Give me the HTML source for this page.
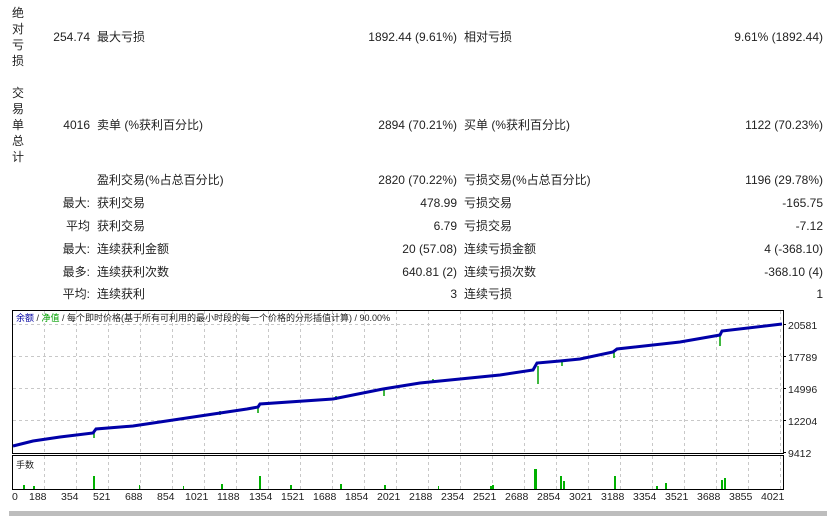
<!DOCTYPE html>
<html><head><meta charset="utf-8"><style>
body{margin:0;width:833px;height:516px;background:#fff;overflow:hidden;position:relative;font-family:"Liberation Sans","Noto Sans CJK SC",sans-serif;font-size:12px;color:#222}
.t{position:absolute;white-space:nowrap;line-height:14px}
.r{text-align:right}
.v{position:absolute;left:11px;width:14px;text-align:center;line-height:16px}
</style></head><body>
<div class="v" style="top:5px">绝<br>对<br>亏<br>损</div>
<div class="v" style="top:85px">交<br>易<br>单<br>总<br>计</div>

<div class="t r" style="right:743px;top:30px">254.74</div>
<div class="t" style="left:97px;top:30px">最大亏损</div>
<div class="t r" style="right:376px;top:30px">1892.44 (9.61%)</div>
<div class="t" style="left:464px;top:30px">相对亏损</div>
<div class="t r" style="right:10px;top:30px">9.61% (1892.44)</div>

<div class="t r" style="right:743px;top:118px">4016</div>
<div class="t" style="left:97px;top:118px">卖单 (%获利百分比)</div>
<div class="t r" style="right:376px;top:118px">2894 (70.21%)</div>
<div class="t" style="left:464px;top:118px">买单 (%获利百分比)</div>
<div class="t r" style="right:10px;top:118px">1122 (70.23%)</div>

<div class="t" style="left:97px;top:173px">盈利交易(%占总百分比)</div>
<div class="t r" style="right:376px;top:173px">2820 (70.22%)</div>
<div class="t" style="left:464px;top:173px">亏损交易(%占总百分比)</div>
<div class="t r" style="right:10px;top:173px">1196 (29.78%)</div>

<div class="t r" style="right:743px;top:196px">最大:</div>
<div class="t" style="left:97px;top:196px">获利交易</div>
<div class="t r" style="right:376px;top:196px">478.99</div>
<div class="t" style="left:464px;top:196px">亏损交易</div>
<div class="t r" style="right:10px;top:196px">-165.75</div>

<div class="t r" style="right:743px;top:219px">平均</div>
<div class="t" style="left:97px;top:219px">获利交易</div>
<div class="t r" style="right:376px;top:219px">6.79</div>
<div class="t" style="left:464px;top:219px">亏损交易</div>
<div class="t r" style="right:10px;top:219px">-7.12</div>

<div class="t r" style="right:743px;top:242px">最大:</div>
<div class="t" style="left:97px;top:242px">连续获利金额</div>
<div class="t r" style="right:376px;top:242px">20 (57.08)</div>
<div class="t" style="left:464px;top:242px">连续亏损金额</div>
<div class="t r" style="right:10px;top:242px">4 (-368.10)</div>

<div class="t r" style="right:743px;top:265px">最多:</div>
<div class="t" style="left:97px;top:265px">连续获利次数</div>
<div class="t r" style="right:376px;top:265px">640.81 (2)</div>
<div class="t" style="left:464px;top:265px">连续亏损次数</div>
<div class="t r" style="right:10px;top:265px">-368.10 (4)</div>

<div class="t r" style="right:743px;top:287px">平均:</div>
<div class="t" style="left:97px;top:287px">连续获利</div>
<div class="t r" style="right:376px;top:287px">3</div>
<div class="t" style="left:464px;top:287px">连续亏损</div>
<div class="t r" style="right:10px;top:287px">1</div>

<svg style="position:absolute;left:0;top:0" width="833" height="516">
<g stroke="#c8c8c8" stroke-dasharray="3,3" stroke-width="1">
<path d="M13 324.5H782M13 356.5H782M13 388.5H782M13 420.5H782"/>
<path d="M44.5 311V453M76.5 311V453M108.5 311V453M140.5 311V453M172.5 311V453M204.5 311V453M236.5 311V453M268.5 311V453M300.5 311V453M332.5 311V453M364.5 311V453M396.5 311V453M428.5 311V453M460.5 311V453M492.5 311V453M524.5 311V453M556.5 311V453M588.5 311V453M620.5 311V453M652.5 311V453M684.5 311V453M716.5 311V453M748.5 311V453M780.5 311V453"/>
<path d="M44.5 456V489M76.5 456V489M108.5 456V489M140.5 456V489M172.5 456V489M204.5 456V489M236.5 456V489M268.5 456V489M300.5 456V489M332.5 456V489M364.5 456V489M396.5 456V489M428.5 456V489M460.5 456V489M492.5 456V489M524.5 456V489M556.5 456V489M588.5 456V489M620.5 456V489M652.5 456V489M684.5 456V489M716.5 456V489M748.5 456V489M780.5 456V489"/>
</g>
<rect x="12.5" y="310.5" width="771" height="143" fill="none" stroke="#000"/>
<rect x="12.5" y="455.5" width="771" height="34" fill="none" stroke="#000"/>
<g stroke="#00a000" stroke-width="1.5" fill="none">
<path d="M94 433V438M258 406V413M384 389V396M538 366V384M562 360V366M614 350V358M720 333V346M336 396V400M220 411V415M433 379V383"/>
</g>
<polyline fill="none" stroke="#0000a8" stroke-width="3" points="13,446 33,441 60,437 93,433 96,429 133,426 200,416 247,409 258,407 260,404 333,399 383,389 420,383 460,379 500,375 533,370 537,363 560,361 580,359 613,352 617,349 680,342 720,335 722,331 782,324"/>
<g fill="#00b000">
<rect x="93" y="476" width="2" height="13"/><rect x="259" y="476" width="2" height="13"/><rect x="534" y="469" width="3" height="20"/><rect x="560" y="476" width="2" height="13"/><rect x="614" y="476" width="2" height="13"/><rect x="721" y="480" width="2" height="9"/>
<rect x="23" y="485" width="2" height="4"/><rect x="33" y="486" width="2" height="3"/><rect x="139" y="485" width="1" height="4"/><rect x="183" y="486" width="1" height="3"/><rect x="221" y="484" width="2" height="5"/><rect x="290" y="485" width="2" height="4"/><rect x="340" y="484" width="2" height="5"/><rect x="384" y="485" width="2" height="4"/><rect x="492" y="485" width="2" height="4"/><rect x="490" y="486" width="2" height="3"/><rect x="563" y="481" width="2" height="8"/><rect x="656" y="486" width="2" height="3"/><rect x="665" y="483" width="2" height="6"/><rect x="724" y="478" width="2" height="11"/><rect x="438" y="486" width="1" height="3"/>
</g>
<g stroke="#000"><path d="M784 324.5H786M784 356.5H786M784 388.5H786M784 420.5H786M784 452.5H786"/></g>
</svg>
<div class="t" style="left:16px;top:312px;font-size:9px;line-height:12px"><span style="color:#0000a0">余额</span> / <span style="color:#00a000">净值</span> / 每个即时价格(基于所有可利用的最小时段的每一个价格的分形插值计算) / 90.00%</div>
<div class="t" style="left:16px;top:459px;font-size:9px;line-height:12px">手数</div>
<div class="t" style="left:788px;top:319px;font-size:10.5px">20581</div>
<div class="t" style="left:788px;top:351px;font-size:10.5px">17789</div>
<div class="t" style="left:788px;top:383px;font-size:10.5px">14996</div>
<div class="t" style="left:788px;top:415px;font-size:10.5px">12204</div>
<div class="t" style="left:788px;top:447px;font-size:10.5px">9412</div>
<div style="position:absolute;left:0;top:490px;width:833px;font-size:10.5px;line-height:14px">
<span class="t" style="left:12px">0</span>
<span class="t" style="left:29px">188</span><span class="t" style="left:61px">354</span><span class="t" style="left:93px">521</span><span class="t" style="left:125px">688</span><span class="t" style="left:157px">854</span><span class="t" style="left:185px">1021</span><span class="t" style="left:217px">1188</span><span class="t" style="left:249px">1354</span><span class="t" style="left:281px">1521</span><span class="t" style="left:313px">1688</span><span class="t" style="left:345px">1854</span><span class="t" style="left:377px">2021</span><span class="t" style="left:409px">2188</span><span class="t" style="left:441px">2354</span><span class="t" style="left:473px">2521</span><span class="t" style="left:505px">2688</span><span class="t" style="left:537px">2854</span><span class="t" style="left:569px">3021</span><span class="t" style="left:601px">3188</span><span class="t" style="left:633px">3354</span><span class="t" style="left:665px">3521</span><span class="t" style="left:697px">3688</span><span class="t" style="left:729px">3855</span><span class="t" style="left:761px">4021</span>
</div>
<div style="position:absolute;left:9px;top:511px;width:818px;height:5px;background:#bdbdbd"></div>
</body></html>
